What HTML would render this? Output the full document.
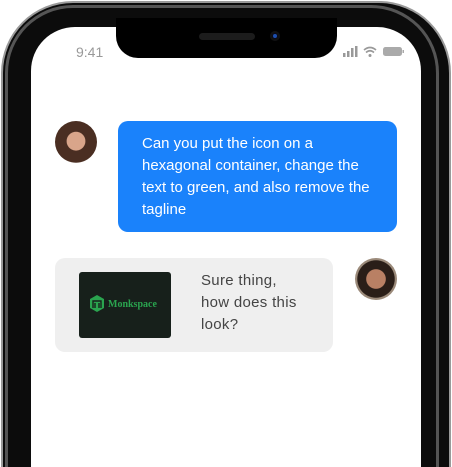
<!DOCTYPE html>
<html><head><meta charset="utf-8"><style>
html,body{margin:0;width:452px;height:467px;overflow:hidden}
body{background:#fff;font-family:"Liberation Sans",Arial,sans-serif}
.wrap{position:relative;width:452px;height:467px;overflow:hidden}
.frame{position:absolute;left:1px;top:1px;width:446px;height:464px;border:2px solid #9a9a9a;border-bottom:none;border-radius:72px 72px 0 0;background:#0c0c0c}
.inner{position:absolute;left:5px;top:5px;width:434px;height:462px;border:3px solid #555;border-bottom:none;border-radius:68px 68px 0 0;box-sizing:border-box}
.screen{position:absolute;left:31px;top:27px;width:390px;height:440px;border-radius:44px 44px 0 0;background:#fff}
.notch{position:absolute;left:116px;top:18px;width:221px;height:40px;background:#000;border-radius:0 0 22px 22px}
.spk{position:absolute;left:199px;top:33px;width:56px;height:7px;border-radius:4px;background:#1c1c1c}
.cam{position:absolute;left:270px;top:31px;width:10px;height:10px;border-radius:50%;background:#0a0a1a;box-shadow:inset 0 0 0 2px #111}
.cam:after{content:"";position:absolute;left:3px;top:3px;width:4px;height:4px;border-radius:50%;background:#1d4fae}
.time{position:absolute;left:76px;top:44px;font-size:14px;color:#999}
.blue{position:absolute;left:118px;top:121px;width:279px;height:111px;background:#1a82fb;border-radius:10px;color:#fff;font-size:15px;line-height:22px;box-sizing:border-box;padding:12px 20px 0 24px}
.gray{position:absolute;left:55px;top:258px;width:278px;height:94px;background:#efefef;border-radius:10px}
.img{position:absolute;left:79px;top:272px;width:92px;height:66px;background:#17201b;border-radius:3px}
.txt{position:absolute;left:201px;top:270px;font-size:15px;line-height:22px;color:#444;letter-spacing:0.3px}
.av{position:absolute;width:42px;height:42px;border-radius:50%}
</style></head><body><div class="wrap">
<div class="frame"></div>
<div class="inner"></div>
<div class="screen"></div>
<div class="notch"></div><div class="spk"></div><div class="cam"></div>
<div class="time">9:41</div>
<svg style="position:absolute;left:343px;top:45px" width="62" height="14">
<rect x="0" y="8" width="2.5" height="4" fill="#999"/><rect x="4" y="6" width="2.5" height="6" fill="#999"/><rect x="8" y="3" width="2.5" height="9" fill="#999"/><rect x="12" y="1" width="2.5" height="11" fill="#999"/>
<path d="M21 5 Q27 0 33 5 M23 7.5 Q27 4 31 7.5" stroke="#999" stroke-width="1.6" fill="none"/><circle cx="27" cy="10.5" r="1.5" fill="#999"/>
<rect x="40" y="2" width="19" height="9" rx="2.5" fill="#aaa"/><rect x="59.5" y="5" width="1.5" height="3" fill="#aaa"/>
</svg>
<div class="av" style="left:55px;top:121px;background:radial-gradient(circle at 50% 48%,#d9a58a 0 30%,#4a2e22 32% 70%,#e8e0da 72%)"></div>
<div class="blue">Can you put the icon on a hexagonal container, change the text to green, and also remove the tagline</div>
<div class="gray"></div>
<div class="img"></div>
<svg style="position:absolute;left:89px;top:294px" width="80" height="20">
<polygon points="8,1 15,5 15,14 8,18 1,14 1,5" fill="#2aa44f"/>
<path d="M4 14V7h8v7M6 14V9M10 14V9" stroke="#17201b" stroke-width="1.4" fill="none"/>
<text x="19" y="13" font-family="Liberation Serif,serif" font-weight="bold" font-size="10" fill="#2aa44f">Monkspace</text>
</svg>
<div class="txt">Sure thing,<br>how does this<br>look?</div>
<div class="av" style="left:355px;top:258px;background:radial-gradient(circle at 50% 50%,#b98064 0 32%,#2a1e18 34% 62%,#9b8a7a 64%)"></div>
</div></body></html>
